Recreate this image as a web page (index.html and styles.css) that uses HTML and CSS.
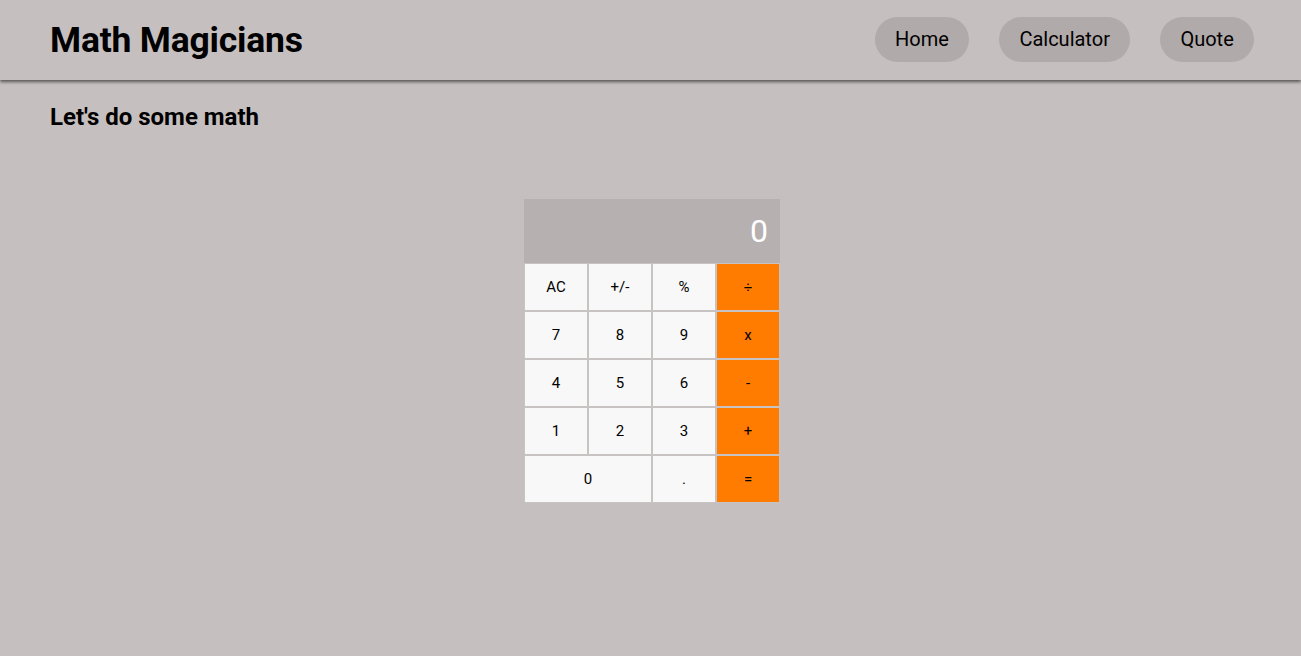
FILE: index.html
```html
<!DOCTYPE html>
<html lang="en">
<head>
<meta charset="utf-8">
<title>Math Magicians</title>
<link rel="stylesheet" href="styles.css">
</head>
<body>
<header class="topbar">
  <h1 class="brand">Math Magicians</h1>
  <nav class="nav">
    <a class="nav-link" href="#">Home</a>
    <a class="nav-link" href="#">Calculator</a>
    <a class="nav-link" href="#">Quote</a>
  </nav>
</header>
<main class="content">
  <h2 class="heading">Let's do some math</h2>
  <div class="calc-wrap">
    <div class="calc">
      <div class="display">0</div>
      <button class="key">AC</button>
      <button class="key">+/-</button>
      <button class="key">%</button>
      <button class="key op">÷</button>
      <button class="key">7</button>
      <button class="key">8</button>
      <button class="key">9</button>
      <button class="key op">x</button>
      <button class="key">4</button>
      <button class="key">5</button>
      <button class="key">6</button>
      <button class="key op">-</button>
      <button class="key">1</button>
      <button class="key">2</button>
      <button class="key">3</button>
      <button class="key op">+</button>
      <button class="key zero">0</button>
      <button class="key">.</button>
      <button class="key op">=</button>
    </div>
  </div>
</main>
</body>
</html>
```
FILE: styles.css
```css
* { box-sizing: border-box; }
body {
  margin: 0;
  background: #c5bfbf;
  font-family: Roboto, "Liberation Sans", sans-serif;
  color: #000;
}
.topbar {
  height: 80px;
  display: flex;
  align-items: center;
  justify-content: space-between;
  padding: 0 47px 0 50px;
  box-shadow: 0 2px 3px rgba(0, 0, 0, 0.55);
  position: relative;
}
.brand {
  margin: 0;
  font-size: 35.5px;
  font-weight: 700;
  letter-spacing: -0.2px;
}
.nav {
  display: flex;
  gap: 30px;
  margin-top: -2px;
}
.nav-link {
  display: block;
  background: #b1aaaa;
  color: #000;
  text-decoration: none;
  font-size: 20px;
  line-height: 23px;
  padding: 11px 20.25px;
  border-radius: 23px;
}
.content {
  padding: 0 50px;
}
.heading {
  margin: 22px 0 0;
  font-size: 24px;
  font-weight: 700;
  line-height: 30px;
}
.calc-wrap {
  display: flex;
  justify-content: center;
  padding: 67px 0 0 3px;
}
.calc {
  width: 256px;
  display: grid;
  grid-template-columns: repeat(4, 64px);
  grid-template-rows: 64px repeat(5, 48px);
}
.display {
  grid-column: 1 / -1;
  background: #b6b0b0;
  color: #fff;
  font-size: 32px;
  text-align: right;
  padding: 13px 12px 0 0;
  line-height: 38px;
}
.key {
  border: 1px solid #c8c3c3;
  background: #f8f8f8;
  font-family: Roboto, "Liberation Sans", sans-serif;
  font-size: 15px;
  color: #000;
  padding: 0;
  margin: 0;
}
.key.op {
  background: #ff7c00;
}
.key.zero {
  grid-column: span 2;
}
```
